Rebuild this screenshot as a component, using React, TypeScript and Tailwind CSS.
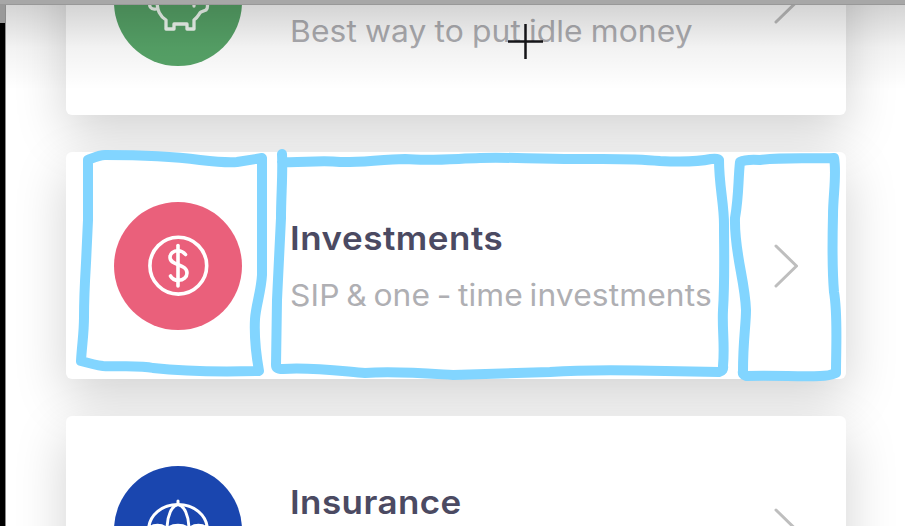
import type { ReactNode } from "react";

function PiggyIcon() {
  return (
    <svg viewBox="0 0 128 128" className="size-32" fill="none" stroke="#f2fbf3" strokeWidth="3.3" strokeLinejoin="round" strokeLinecap="round">
      <path d="M37 64c-3 4 0 8 5 7M43 62c0 11 3 16 9 20v9h8v-5h13v5h7v-9c5-4 5-7 7-8l5-2c2-2 2-6 0-9h-5c-1-3-4-5-5-6v-9l-10 6H62c-12 0-18 5-19 8Z" />
      <path d="M80 66v2" />
    </svg>
  );
}

function DollarIcon() {
  return (
    <svg viewBox="0 0 128 128" className="size-32" fill="none" stroke="#fff" strokeWidth="3.6" strokeLinecap="round">
      <circle cx="64.3" cy="63.7" r="28.4" />
      <path d="M64 43.5V84" />
      <path d="M71.500 52.500c-2-2.600-4.500-3.800-7.500-3.800-4.700 0-8 2.900-8 6.600 0 9 17 6 17 15.700 0 4.200-3.600 7.300-8.500 7.300-3.600 0-6.400-1.500-8-4.300" />
    </svg>
  );
}

function UmbrellaIcon() {
  return (
    <svg viewBox="0 0 128 128" className="size-32" fill="none" stroke="#fff" strokeWidth="3" strokeLinecap="round" strokeLinejoin="round">
      <path d="M64 35v3M34.5 64C35 49 48 38.500 64 38.500s29 10.500 29.500 25.500c-3-6.500-15-6.500-18.500 0-4-6.500-18-6.500-22 0-3.500-6.500-15.500-6.500-18.500 0Z" />
      <path d="M53 64c0-15 5-24.500 11-25.500 6 1 11 10.500 11 25.500M64 60v32" />
    </svg>
  );
}

interface CardProps {
  title?: string;
  subtitle?: string;
  color: string;
  icon: ReactNode;
  titleClass?: string;
  subtitleClass?: string;
}

function Card({ title, subtitle, color, icon, titleClass = "", subtitleClass = "" }: CardProps) {
  return (
    <article className="relative flex h-[227px] w-[780px] shrink-0 items-center rounded-md bg-white pl-12 pr-12 shadow-[0_18px_52px_rgba(0,0,0,0.18)]">
      <div className={`size-32 shrink-0 rounded-full ${color}`}>{icon}</div>
      <div className="ml-12 flex-1 whitespace-nowrap">
        <h2 className={`h-14 origin-left scale-x-[1.06] text-[33px] font-semibold leading-[56px] text-[#4b4a62] ${titleClass}`}>{title}</h2>
        <p className={`h-14 origin-left scale-x-[1.06] text-[30px] font-normal leading-[58px] text-[#afafb3] ${subtitleClass}`}>{subtitle}</p>
      </div>
      <svg viewBox="0 0 24 44" className="h-11 w-6 shrink-0" fill="none" stroke="#bebebe" strokeWidth="3" strokeLinecap="round" strokeLinejoin="round">
        <path d="M2 2 22.500 22 2 42" />
      </svg>
    </article>
  );
}

function Annotations() {
  return (
    <svg viewBox="0 0 905 526" className="pointer-events-none absolute inset-0 h-full w-full" fill="none">
      <g stroke="#82d5ff" strokeWidth="10" strokeLinecap="round" strokeLinejoin="round">
        <path d="M88 160C93 158 99 155 105 155C135 155 170 156 200 160C218 162 227 163 237 162L262 158V275C261 292 256 305 255 319C254 338 256 354 259 371C220 372 180 371 153 368C140 365 120 367 103 366C95 365 88 363 81 361C82 344 84 333 84 317C84 296 85 280 86 263L88 220Z" />
        <path d="M282 154C283 175 281 195 281 218L277 300L276 365Q276 369 283 369C310 367 340 371 365 373C395 371 420 373 453 375C490 374 520 373 550 372C590 369 630 370 665 371L719 372Q724 371 723 366C725 345 722 330 723 310C725 280 724 250 724 224C724 204 719 185 719 160Q718 158 711 159C697 162 680 162 660 161C630 158 605 159 575 159C530 159 510 157 480 158C450 159 430 161 405 159C385 159 355 163 340 162C320 160 300 163 282 162" />
        <path d="M740 162Q746 159 760 160C785 157 810 159 834 158C837 174 833 195 833 215C832 255 833 280 834 292C838 315 836 345 836 373Q829 376 820 376C800 377 775 375 746 376Q742 375 743 371C743 340 746 325 746 310C745 280 734 252 735 218C739 195 738 180 740 162Z" />
      </g>
      <path d="M508 41.5h35M525.500 24v35" stroke="#151518" strokeWidth="2.5" />
    </svg>
  );
}

export default function App() {
  return (
    <div className="relative flex h-[526px] w-[905px] overflow-hidden bg-white font-[Inter,sans-serif]">
      <div className="flex w-1.5 shrink-0 flex-col border-r border-[#8c8c8c] bg-black">
        <div className="h-[23px] bg-[#999999]" />
      </div>
      <div className="flex min-w-0 flex-1 flex-col">
        <div className="z-10 -ml-1.5 h-[5px] shrink-0 border-b border-[#989898] bg-[#a7a7a7]" />
        <main className="relative min-h-0 flex-1 overflow-hidden">
          <div className="-mt-[117px] ml-[60px] flex flex-col gap-[37px]">
            <Card subtitle="Best way to put idle money" color="bg-[#57a468]" icon={<PiggyIcon />} subtitleClass="tracking-[0.1px] [word-spacing:-1px]" />
            <Card
              title="Investments"
              subtitle="SIP & one - time investments"
              color="bg-[#ea607b]"
              icon={<DollarIcon />}
              titleClass="tracking-[0.5px]"
              subtitleClass="tracking-[0.1px] [word-spacing:-2.3px]"
            />
            <Card title="Insurance" color="bg-[#1a46af]" icon={<UmbrellaIcon />} titleClass="tracking-[0.4px]" />
          </div>
          <div className="absolute inset-x-0 top-0 h-[85px] bg-linear-to-b from-black/17 via-black/5 to-transparent" />
        </main>
      </div>
      <Annotations />
    </div>
  );
}
